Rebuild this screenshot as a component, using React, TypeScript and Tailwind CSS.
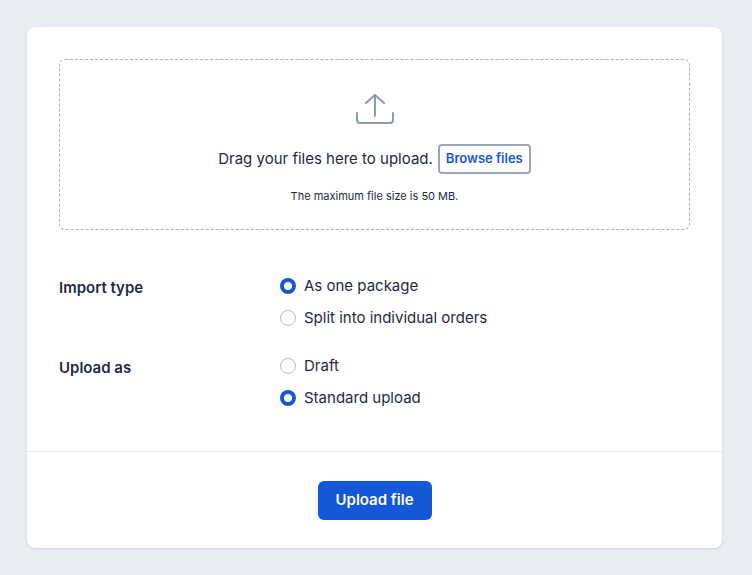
const Radio = ({ checked, label }: { checked: boolean; label: string }) => (
  <label className="flex items-center gap-[8px] h-[32px]">
    {checked ? (
      <span className="w-[16px] h-[16px] rounded-full border-[4px] border-[#1458d8] bg-white" />
    ) : (
      <span className="w-[16px] h-[16px] rounded-full border border-[#b4bcc8] bg-white" />
    )}
    <span className="text-[15px] text-[#1d2a44]">{label}</span>
  </label>
);

const App = () => {
  return (
    <div className="w-[752px] h-[575px] bg-[#e9ecf1] pt-[27px] px-[27px]" style={{ fontFamily: "Inter, sans-serif" }}>
      <div className="w-[695px] h-[521px] bg-white rounded-[8px] shadow-sm flex flex-col">
        <div className="px-[32px] pt-[32px]">
          <div className="h-[171px] border border-dashed border-[#a9b1bd] rounded-[6px] flex flex-col items-center pt-[32px]">
            <svg width="40" height="34" viewBox="0 0 40 34" fill="none" stroke="#8a9bb0" strokeWidth="2" strokeLinecap="round" strokeLinejoin="round">
              <path d="M20 24V3" />
              <path d="M11 11l9-8 9 8" />
              <path d="M2 21v7a3 3 0 003 3h30a3 3 0 003-3v-7" />
            </svg>
            <div className="flex items-center gap-[5px] mt-[18px]">
              <span className="text-[15px] text-[#1d2a44]">Drag your files here to upload.</span>
              <button className="h-[30px] px-[6px] border-[2px] border-[#9aa7b8] rounded-[4px] text-[13px] font-semibold text-[#1458d8]">Browse files</button>
            </div>
            <p className="text-[11px] text-[#1d2a44] mt-[14px]">The maximum file size is 50 MB.</p>
          </div>
          <div className="grid grid-cols-[221px_1fr] mt-[40px]">
            <div className="text-[15px] font-semibold text-[#1d2a44] pt-[7px]">Import type</div>
            <div className="flex flex-col">
              <Radio checked label="As one package" />
              <Radio checked={false} label="Split into individual orders" />
            </div>
            <div className="text-[15px] font-semibold text-[#1d2a44] pt-[23px]">Upload as</div>
            <div className="flex flex-col pt-[16px]">
              <Radio checked={false} label="Draft" />
              <Radio checked label="Standard upload" />
            </div>
          </div>
        </div>
        <div className="mt-auto border-t border-[#e4e7ec] h-[97px] flex items-center justify-center">
          <button className="w-[114px] h-[39px] bg-[#1458d8] rounded-[6px] text-white text-[15px] font-semibold">Upload file</button>
        </div>
      </div>
    </div>
  );
};

export default App;
